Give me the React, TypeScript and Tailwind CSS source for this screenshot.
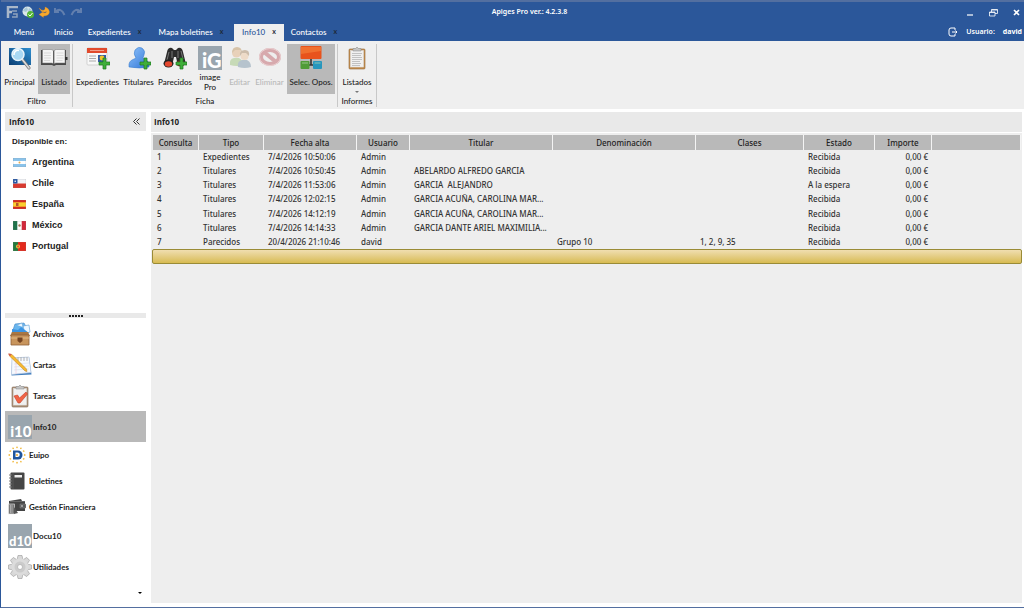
import type { ReactNode } from "react";

const tabs = [
  { name: "Menú", width: "w-[44px]" },
  { name: "Inicio", width: "w-[35px]" },
  { name: "Expedientes", width: "w-[67px]", closable: true },
  { name: "Mapa boletines", width: "w-[86px]", closable: true },
  { name: "Info10", width: "w-[50px]", closable: true, active: true },
  { name: "Contactos", width: "w-[60px]", closable: true },
];

const columns = [
  { name: "Consulta", width: "w-[46px]" },
  { name: "Tipo", width: "w-[65px]" },
  { name: "Fecha alta", width: "w-[93px]" },
  { name: "Usuario", width: "w-[53px]" },
  { name: "Titular", width: "w-[143px]" },
  { name: "Denominación", width: "w-[143px]" },
  { name: "Clases", width: "w-[108px]" },
  { name: "Estado", width: "w-[71px]" },
  { name: "Importe", width: "w-[57px]" },
  { name: "", width: "" },
];

const rows = [
  ["1", "Expedientes", "7/4/2026 10:50:06", "Admin", "", "", "", "Recibida", "0,00 €"],
  ["2", "Titulares", "7/4/2026 10:50:45", "Admin", "ABELARDO ALFREDO GARCIA", "", "", "Recibida", "0,00 €"],
  ["3", "Titulares", "7/4/2026 11:53:06", "Admin", "GARCIA  ALEJANDRO", "", "", "A la espera", "0,00 €"],
  ["4", "Titulares", "7/4/2026 12:02:15", "Admin", "GARCIA ACUÑA, CAROLINA MAR...", "", "", "Recibida", "0,00 €"],
  ["5", "Titulares", "7/4/2026 14:12:19", "Admin", "GARCIA ACUÑA, CAROLINA MAR...", "", "", "Recibida", "0,00 €"],
  ["6", "Titulares", "7/4/2026 14:14:33", "Admin", "GARCIA DANTE ARIEL MAXIMILIA...", "", "", "Recibida", "0,00 €"],
  ["7", "Parecidos", "20/4/2026 21:10:46", "david", "", "Grupo 10", "1, 2, 9, 35", "Recibida", "0,00 €"],
];

function Plus() {
  return (
    <path d="M17 12h3v4h4v3h-4v4h-3v-4h-4v-3h4z" fill="#3fae3a" stroke="#1d7a22" strokeWidth=".7" />
  );
}

function SearchIcon() {
  return (
    <svg viewBox="0 0 24 24" className="size-6">
      <defs>
        <linearGradient id="screen" x1="0" y1="1" x2="1" y2="0">
          <stop offset="0" stopColor="#0b3f74" />
          <stop offset="1" stopColor="#2f8fd0" />
        </linearGradient>
      </defs>
      <rect x="1" y="2" width="22" height="17" fill="url(#screen)" />
      <path d="M14 13l7 9" stroke="#777" strokeWidth="3" strokeLinecap="round" />
      <path d="M14 13l7 9" stroke="#ddd" strokeWidth="1.6" strokeLinecap="round" />
      <circle cx="10" cy="8.500" r="6" fill="#a9d8f3" stroke="#e8f4fb" strokeWidth="1.500" />
      <path d="M6 9a4 4 0 0 1 5-4.500" stroke="#fff" strokeWidth="1.500" fill="none" />
    </svg>
  );
}

function BookIcon() {
  return (
    <svg viewBox="0 0 28 20" className="h-5 w-7">
      <path d="M1 2h11l2 1 2-1h10v15H16l-2 1-2-1H1z" fill="#4a4a4a" />
      <path d="M2.500 1.500H11q2 0 2.500 1.500v13q-.5-1-2-1h-9zM25 1.500h-8.500q-2 0-2.500 1.500v13q.5-1 2-1h9z" fill="#f4f4f4" stroke="#777" strokeWidth=".5" />
      <path d="M4 5h7M4 7.500h7M4 10h7M4 12.500h6M16.500 5h7M16.500 7.500h7M16.500 10h7M16.500 12.500h6" stroke="#cfcfcf" strokeWidth=".7" />
      <path d="M13.700 3v13" stroke="#555" />
      <path d="M25 9h2.500v3H25z" fill="#333" />
    </svg>
  );
}

function NewspaperIcon() {
  return (
    <svg viewBox="0 0 24 24" className="size-6">
      <rect x="1" y="2" width="20" height="17" rx="1" fill="#f8f8f8" stroke="#c4c4c4" strokeWidth=".7" />
      <rect x="1" y="2" width="20" height="5" fill="#e14a2c" />
      <path d="M4 4.500h14" stroke="#f2a08c" />
      <path d="M3 10h7M3 12.500h7M3 15h7" stroke="#aaa" />
      <rect x="12" y="9" width="8" height="7" fill="#315ba5" />
      <circle cx="16" cy="12" r="2.400" fill="#f1c52b" />
      <Plus />
    </svg>
  );
}

function PersonIcon() {
  return (
    <svg viewBox="0 0 24 24" className="size-6">
      <defs>
        <linearGradient id="person" x1="0" y1="0" x2="1" y2="1">
          <stop offset="0" stopColor="#8fc3fb" />
          <stop offset="1" stopColor="#2f74d6" />
        </linearGradient>
      </defs>
      <path d="M2 21q-1-6 5-8l2-1q-3-4-1-8 3-4 7-2 4 3 2 7l-1 3 3 2q4 2 3 7-9 2-20 0z" fill="url(#person)" stroke="#2f74c8" strokeWidth=".5" />
      <Plus />
    </svg>
  );
}

function BinocularsIcon() {
  return (
    <svg viewBox="0 0 24 24" className="size-6">
      <path d="M1 18L4 6q1-5 5-4l2 2h2l2-2q4-1 5 4l3 12-8 2-2-9h-2l-2 9z" fill="#2b2b2b" />
      <path d="M6 6l-2 8M18 5l2 8M9 5v7M15 5v7" stroke="#777" />
      <ellipse cx="5.500" cy="17.500" rx="5" ry="4" fill="#222" />
      <ellipse cx="5.500" cy="18" rx="3.700" ry="2.700" fill="#e4472e" />
      <ellipse cx="17.500" cy="17.500" rx="4" ry="3" fill="#7a2a20" />
      <Plus />
    </svg>
  );
}

function LetterLogo({ text, size }: { text: string; size: number }) {
  return (
    <svg viewBox="0 0 24 24" className="size-6">
      <rect width="24" height="24" fill="#99a5ae" />
      <text x="23.500" y="22" textAnchor="end" fontFamily="Lato, sans-serif" fontWeight="900" fontSize={size} fill="#fff">
        {text}
      </text>
    </svg>
  );
}

function PeopleIcon() {
  return (
    <svg viewBox="0 0 24 24" className="size-6 opacity-40">
      <path d="M2 19q-1-6 4-7h5q4 2 4 7-6 2-13 0z" fill="#8dbb65" />
      <circle cx="8.500" cy="7" r="4.500" fill="#dfa56c" />
      <path d="M4 7q0-6 5-6t5 6l-2-3H7z" fill="#b48240" />
      <path d="M10 21q-1-6 4-7h5q4 2 4 7-6 2-13 0z" fill="#63849c" />
      <circle cx="16.500" cy="10" r="4" fill="#edbf90" />
      <path d="M12 10q-1-6 5-6 5 0 4 6l-3-3h-4z" fill="#9b7448" />
    </svg>
  );
}

function ForbiddenIcon() {
  return (
    <svg viewBox="0 0 24 24" className="size-6 opacity-40">
      <ellipse cx="12" cy="11" rx="9" ry="7" fill="#eee" stroke="#b5434b" strokeWidth="4" />
      <path d="M6 6l12 10" stroke="#b5434b" strokeWidth="4" />
      <ellipse cx="12" cy="11" rx="10.500" ry="8.500" fill="none" stroke="#e2a1a5" />
    </svg>
  );
}

function DiagramIcon() {
  return (
    <svg viewBox="0 0 24 24" className="size-6">
      <path d="M12 12v7M9 19h7" stroke="#333" strokeWidth="1.600" />
      <rect x="1.500" y="0" width="21" height="13" rx="1" fill="#e8531c" />
      <path d="M2 1h20v4L2 8z" fill="#f0702f" />
      <rect x="1.500" y="15" width="9" height="8" rx="1" fill="#4f9c37" />
      <rect x="14" y="15" width="9" height="8" rx="1" fill="#2796bd" />
      <path d="M3 17h6M15.500 17h6" stroke="#b7d9b0" strokeWidth=".7" />
    </svg>
  );
}

function ClipboardIcon({ checked }: { checked?: boolean }) {
  return (
    <svg viewBox="0 0 24 24" className="size-6">
      <rect x="4" y="3" width="16" height="20" rx="1" fill={checked ? "#b29a80" : "#c39155"} stroke={checked ? "#78604c" : "#96672f"} strokeWidth=".6" />
      <rect x="5.500" y="4.500" width="13" height="16.500" fill="#f0f0f0" stroke="#ddd" strokeWidth=".5" />
      <path d="M8 4V2.500h2.500Q12-.5 13.500 2.500H16V5H8z" fill="#c4c4c4" stroke="#888" strokeWidth=".5" />
      {checked ? (
        <path d="M6 12l3.500-1 2 3L18 8l1.500 2-7.500 9h-2z" fill="#f06445" stroke="#c53c25" strokeWidth=".6" />
      ) : (
        <path d="M7 7.500h10M7 9.500h9M7 11.500h10M7 13.500h10M7 15.500h8M7 17.500h9M7 19.500h8" stroke="#bcbcbc" strokeWidth=".9" />
      )}
    </svg>
  );
}

function ArchiveIcon() {
  return (
    <svg viewBox="0 0 24 24" className="size-6">
      <path d="M4 11L7 2l9-1 5 9z" fill="#69b6ee" stroke="#4186c8" strokeWidth=".6" />
      <path d="M9 3l5-2 1 4M15 4l6-1 1 7-5 2z" fill="#edf7ff" stroke="#6fa7d8" strokeWidth=".7" />
      <path d="M4 7l6 1 3-3 8 6H4z" fill="#3b94e3" />
      <path d="M2 14l2-4h16l2 4z" fill="#a97743" />
      <path d="M3 13h18v10H3z" fill="#c8955d" stroke="#8f6137" strokeWidth=".8" />
      <path d="M3 16h18" stroke="#e2ba84" />
      <path d="M9.500 15.500h5v3.500l-2.500 2-2.500-2z" fill="#754422" />
    </svg>
  );
}

function LetterIcon() {
  return (
    <svg viewBox="0 0 24 24" className="size-6">
      <path d="M4 5l17-1 2.500 17.500-20 1z" fill="#437fbe" />
      <path d="M4 5l17-1 2 15.500-19.500 2z" fill="#f6f9fe" stroke="#b9c9df" strokeWidth=".7" />
      <path d="M6 11l15-1M6 14l15-1M6 17l15-1" stroke="#d4e1f0" strokeWidth=".7" />
      <path d="M8 6v15" stroke="#f5b8c4" strokeWidth=".5" />
      <path d="M10 4v4M13 4v4M16 4v4M19 4v4" stroke="#b0b0b0" />
      <path d="M1 1l3 .5L18.500 16l.5 2.500-2-.5L1.500 3z" fill="#f5b82f" stroke="#b77920" strokeWidth=".5" />
      <path d="M0 .5L3.500 1 2 3.500z" fill="#d35c4b" />
    </svg>
  );
}

function EuipoIcon() {
  const stars = [0, 30, 60, 90, 120, 150, 180, 210, 240, 270, 300, 330];
  return (
    <svg viewBox="0 0 18 18" className="size-[18px]">
      {stars.map((angle) => (
        <circle key={angle} cx="9" cy="1.300" r=".9" fill="#f2bd48" transform={`rotate(${angle} 9 9)`} />
      ))}
      <path d="M5 4.500h5a4 4 0 0 1 0 9H5z" fill="#1f559d" />
      <path d="M7.500 6.500h2a2.200 2.200 0 0 1 0 4.500h-2z" fill="#fff" />
      <circle cx="9" cy="9" r="1" fill="#e7a92d" />
    </svg>
  );
}

function NotebookIcon() {
  return (
    <svg viewBox="0 0 18 18" className="size-[18px]">
      <rect x="2.500" y=".5" width="14" height="17" rx="1" fill="#454545" />
      <path d="M1 3h3M1 6h3M1 9h3M1 12h3M1 15h3" stroke="#777" />
      <path d="M5 1v16" stroke="#666" strokeWidth=".6" />
      <rect x="6.500" y="3" width="7.500" height="2.500" fill="#eee" />
    </svg>
  );
}

function WalletIcon() {
  return (
    <svg viewBox="0 0 18 18" className="size-[18px]">
      <path d="M1 3l12-2 1 2h3v10H6L5 6H1z" fill="#444" />
      <path d="M2 3.500h15" stroke="#777" strokeWidth=".7" />
      <path d="M12 6h6v4h-6z" fill="#5b5b5b" stroke="#999" strokeWidth=".4" />
      <circle cx="14" cy="8" r=".8" fill="#eee" />
      <rect x=".5" y="6" width="6" height="10" fill="#777" stroke="#eee" strokeWidth=".6" />
      <path d="M2 8h3M2 10h3M2 12h3M2 14h3" stroke="#ddd" strokeDasharray="1 .5" />
      <path d="M6 9l4 6-4 1z" fill="#555" />
    </svg>
  );
}

function GearIcon() {
  const teeth = [0, 45, 90, 135, 180, 225, 270, 315];
  return (
    <svg viewBox="0 0 24 24" className="size-6">
      {teeth.map((angle) => (
        <path key={angle} d="M9 5l1-4.500h4L15 5z" fill="#d8d8d8" stroke="#999" strokeWidth=".6" transform={`rotate(${angle} 12 12)`} />
      ))}
      <circle cx="12" cy="12" r="8.500" fill="#dcdcdc" />
      <circle cx="12" cy="12" r="5.500" fill="#cbcbcb" />
      <circle cx="12" cy="12" r="2.500" fill="#fff" stroke="#aaa" strokeWidth=".7" />
    </svg>
  );
}

function Flag({ country }: { country: string }) {
  return (
    <svg viewBox="0 0 13 9" className="h-[9px] w-[13px]">
      {country === "Argentina" && (
        <>
          <path d="M0 0h13v9H0z" fill="#8ac3eb" />
          <path d="M0 3h13v3H0z" fill="#fff" />
          <circle cx="6.500" cy="4.500" r="1" fill="#e6a94b" />
        </>
      )}
      {country === "Chile" && (
        <>
          <path d="M0 0h13v5H0z" fill="#f1f3f7" />
          <path d="M0 4.500h13V9H0z" fill="#d83a30" />
          <path d="M0 0h4.500v4.500H0z" fill="#2456a6" />
          <circle cx="2.200" cy="2.200" r=".8" fill="#fff" />
        </>
      )}
      {country === "España" && (
        <>
          <path d="M0 0h13v9H0z" fill="#d52b1e" />
          <path d="M0 2.300h13v4.400H0z" fill="#fbcf2d" />
          <path d="M3 3h2.500v3H3z" fill="#b5572a" />
        </>
      )}
      {country === "México" && (
        <>
          <path d="M0 0h13v9H0z" fill="#fff" />
          <path d="M0 0h4.300v9H0z" fill="#20734b" />
          <path d="M8.700 0H13v9H8.700z" fill="#d1283a" />
          <circle cx="6.500" cy="4.500" r="1.200" fill="#a07750" />
        </>
      )}
      {country === "Portugal" && (
        <>
          <path d="M0 0h13v9H0z" fill="#e32a1d" />
          <path d="M0 0h5v9H0z" fill="#267a3e" />
          <circle cx="5" cy="4.500" r="2" fill="#f1c638" />
          <path d="M4.200 3.500h1.600V5l-.8.800-.8-.8z" fill="#d63c32" />
        </>
      )}
      <path d="M0 0h13v9H0z" fill="none" stroke="#888" strokeWidth=".5" opacity=".5" />
    </svg>
  );
}

function RibbonButton({ icon, label, width, active, disabled, menu }: {
  icon: ReactNode;
  label: ReactNode;
  width: string;
  active?: boolean;
  disabled?: boolean;
  menu?: boolean;
}) {
  return (
    <button
      type="button"
      disabled={disabled}
      className={`flex h-[50px] flex-col items-center pt-[2px] ${width} ${active ? "bg-[#b9b9b9]" : ""} ${disabled ? "text-[#b8b8b8]" : "text-[#222]"}`}
    >
      <span className="flex h-6 items-center">{icon}</span>
      <span className="flex h-[23px] items-center justify-center pt-px text-center leading-[10px] whitespace-nowrap">{label}</span>
      {menu && <span className="-mt-[2px] border-x-2 border-t-2 border-x-transparent border-t-[#777]" />}
    </button>
  );
}

function RibbonGroup({ name, children }: { name: string; children: ReactNode }) {
  return (
    <section aria-label={name} className="flex flex-col border-r border-[#c8c8c8] px-[2px]">
      <div className="flex gap-[2px]">{children}</div>
      <div className="pt-[2px] text-center leading-[10px] whitespace-nowrap">{name}</div>
    </section>
  );
}

const navItems = [
  { name: "Archivos", icon: <ArchiveIcon /> },
  { name: "Cartas", icon: <LetterIcon /> },
  { name: "Tareas", icon: <ClipboardIcon checked /> },
  { name: "Info10", icon: <LetterLogo text="i10" size={15} />, active: true },
  { name: "Euipo", icon: <EuipoIcon />, small: true },
  { name: "Boletines", icon: <NotebookIcon />, small: true },
  { name: "Gestión Financiera", icon: <WalletIcon />, small: true },
  { name: "Docu10", icon: <LetterLogo text="d10" size={13} /> },
  { name: "Utilidades", icon: <GearIcon /> },
];

function Header() {
  return (
    <header className="border-t-2 border-[#536fa0] bg-[#2b579a] text-white">
      <div className="grid h-[22px] grid-cols-[1fr_auto_1fr] items-center pb-[2px]">
        <div className="flex items-center gap-[4px] pl-[5px]">
          <svg viewBox="0 0 12 12" className="size-3" fill="none">
            <path d="M2 12V1h10M2 6h4" stroke="#a9b7c9" strokeWidth="2.500" />
            <path d="M6 5h5M7 8h4v3H6" stroke="#8fa2bd" strokeWidth="1.500" />
          </svg>
          <button type="button" aria-label="Conectar">
            <svg viewBox="0 0 12 12" className="size-3">
              <circle cx="5.500" cy="5.500" r="5" fill="#d9e6ea" />
              <path d="M2 3l3-2 1 3-2 2-3-1zM7 2l3 2-1 3-3-1z" fill="#a9c8d6" />
              <circle cx="8.500" cy="8.500" r="3.500" fill="#54b637" />
              <path d="M6.500 8.500L8 10l2.500-3" stroke="#fff" fill="none" />
            </svg>
          </button>
          <button type="button" aria-label="Actualizar">
            <svg viewBox="0 0 12 12" className="size-3">
              <path d="M1 2l2.500 2Q6 5 7 3V1q4 1 4.500 5-.5 4-6 4v1.500L1 8.500 5.500 5.500V7q3 0 3-1.500Q4 8 1 2z" fill="#f8a92c" stroke="#d98420" strokeWidth=".3" />
            </svg>
          </button>
          <button type="button" aria-label="Deshacer">
            <svg viewBox="0 0 12 12" className="size-3" fill="none" stroke="#627fae" strokeWidth="2">
              <path d="M1 2v4h4M1.500 5.500Q7 1 10.500 9" />
            </svg>
          </button>
          <button type="button" aria-label="Rehacer">
            <svg viewBox="0 0 12 12" className="size-3" fill="none" stroke="#627fae" strokeWidth="2">
              <path d="M11 2v4H7M10.500 5.500Q5 1 1.500 9" />
            </svg>
          </button>
        </div>
        <h1 className="pl-[34px] font-['Noto_Sans',sans-serif] text-[7px] font-semibold">Apiges Pro ver.: 4.2.3.8</h1>
        <div className="flex justify-end gap-[14px] pr-[3px]">
          <button type="button" aria-label="Minimizar">
            <svg viewBox="0 0 9 9" className="size-[9px]"><path d="M1 7h6" stroke="#fff" strokeWidth="1.200" /></svg>
          </button>
          <button type="button" aria-label="Restaurar">
            <svg viewBox="0 0 9 9" className="size-[9px]" fill="none" stroke="#fff" strokeWidth=".8">
              <path d="M.5 4h5.500v4H.5zM2.500 4V1.500h6v4H6M.5 4.500H6M2.500 2h6" />
            </svg>
          </button>
          <button type="button" aria-label="Cerrar">
            <svg viewBox="0 0 9 9" className="size-[9px]"><path d="M2 2l5 5M7 2L2 7" stroke="#fff" strokeWidth="1.600" /></svg>
          </button>
        </div>
      </div>
      <div className="flex h-[17px] justify-between">
        <nav className="flex pl-px">
          {tabs.map((tab) => (
            <div
              key={tab.name}
              className={`flex items-center justify-center pb-px ${tab.width} ${tab.closable ? "gap-[7px]" : ""} ${tab.active ? "bg-[#efefef] text-[#2b579a]" : ""}`}
            >
              <button type="button" className="whitespace-nowrap">{tab.name}</button>
              {tab.closable && (
                <button type="button" aria-label={`Cerrar ${tab.name}`} className="pb-px text-[7px] font-bold text-[#1d2836]">x</button>
              )}
            </div>
          ))}
        </nav>
        <div className="flex items-center pr-[2px] pb-px font-['Noto_Sans',sans-serif] text-[7px] font-semibold">
          <button type="button" aria-label="Salir" className="mr-2">
            <svg viewBox="0 0 10 10" className="size-[10px]" fill="none" stroke="#fff">
              <path d="M7 3V1H3Q1 1 1 3v4q0 2 2 2h4V7M4 5h5M7.500 3.500L9 5 7.500 6.500" />
            </svg>
          </button>
          <span className="mr-2">Usuario:</span>
          <span className="font-bold">david</span>
        </div>
      </div>
    </header>
  );
}

function Ribbon() {
  return (
    <div className="flex h-[68px] bg-[#efefef] pt-[3px] pb-[2px]">
      <RibbonGroup name="Filtro">
        <RibbonButton icon={<SearchIcon />} label="Principal" width="w-[33px]" />
        <RibbonButton icon={<BookIcon />} label="Listado" width="w-[32px]" active />
      </RibbonGroup>
      <RibbonGroup name="Ficha">
        <RibbonButton icon={<NewspaperIcon />} label="Expedientes" width="w-[45px]" />
        <RibbonButton icon={<PersonIcon />} label="Titulares" width="w-[33px]" />
        <RibbonButton icon={<BinocularsIcon />} label="Parecidos" width="w-[36px]" />
        <RibbonButton icon={<LetterLogo text="iG" size={20} />} label={<>image<br />Pro</>} width="w-[30px]" />
        <RibbonButton icon={<PeopleIcon />} label="Editar" width="w-[25px]" disabled />
        <RibbonButton icon={<ForbiddenIcon />} label="Eliminar" width="w-[31px]" disabled />
        <RibbonButton icon={<DiagramIcon />} label="Selec. Opos." width="w-[48px]" active />
      </RibbonGroup>
      <RibbonGroup name="Informes">
        <RibbonButton icon={<ClipboardIcon />} label="Listados" width="w-[34px]" menu />
      </RibbonGroup>
    </div>
  );
}

function Sidebar() {
  return (
    <aside className="flex w-[150px] shrink-0 flex-col pr-[5px] pl-[4px]">
      <div className="mt-[3px] flex h-[19px] items-center justify-between bg-[#e9e9e9] pr-[6px] pl-[4px]">
        <h2 className="font-['Open_Sans',sans-serif] text-[8px] font-bold">Info10</h2>
        <button type="button" aria-label="Contraer panel">
          <svg viewBox="0 0 7 7" className="size-[7px]" fill="none" stroke="#333"><path d="M3.500.5l-3 3 3 3M6.500.5l-3 3 3 3" /></svg>
        </button>
      </div>
      <div className="flex-1 pl-[7px] font-['Liberation_Sans',Arial,sans-serif] text-[9px] font-bold">
        <h3 className="flex h-[21px] items-center text-[8px]">Disponible en:</h3>
        <ul>
          {["Argentina", "Chile", "España", "México", "Portugal"].map((country) => (
            <li key={country} className="flex h-[21px] items-center gap-[6px] pl-px">
              <Flag country={country} />
              <a href="#">{country}</a>
            </li>
          ))}
        </ul>
      </div>
      <div className="flex h-[5px] items-center justify-center gap-px bg-[#e9e9e9]">
        {[1, 2, 3, 4, 5].map((dot) => (
          <span key={dot} className="size-[2px] bg-[#222]" />
        ))}
      </div>
      <nav>
        {navItems.map((item) => (
          <button
            key={item.name}
            type="button"
            className={`flex w-full items-center pl-[3px] text-[8px] font-bold ${item.small ? "h-[26px] gap-[3px]" : "h-[31px] gap-px"} ${item.active ? "bg-[#b9b9b9]" : ""}`}
          >
            {item.icon}
            {item.name}
          </button>
        ))}
      </nav>
      <button type="button" aria-label="Más opciones" className="mr-[4px] flex h-[25px] items-center self-end pb-[4px]">
        <span className="border-x-2 border-t-2 border-x-transparent border-t-black" />
      </button>
    </aside>
  );
}

function QueryTable() {
  return (
    <main className="mt-[3px] mr-[2px] mb-[4px] min-w-0 flex-1 bg-[#eeeeee] font-['Noto_Sans',sans-serif]">
      <h2 className="flex h-[21px] items-center border-b border-white bg-[#e9e9e9] pl-[3px] font-['Open_Sans',sans-serif] text-[8px] font-bold">Info10</h2>
      <div className="pt-[2px] pr-px pl-[2px]">
        <table className="h-[114px] w-full table-fixed border-separate border-spacing-0 text-[8px] leading-[12px] text-[#333]">
          <thead>
            <tr>
              {columns.map((column) => (
                <th key={column.name} className={`h-[15px] border-r border-[#f4f4f4] bg-[#b9b9b9] p-0 font-medium text-[#222] ${column.width}`}>
                  {column.name}
                </th>
              ))}
            </tr>
          </thead>
          <tbody>
            {rows.map((row) => (
              <tr key={row[0]}>
                {row.map((cell, i) => (
                  <td key={i} className={`h-[14px] overflow-hidden p-0 whitespace-pre ${i === 8 ? "pr-[4px] text-right" : "pl-[4px]"}`}>
                    {cell}
                  </td>
                ))}
                <td />
              </tr>
            ))}
          </tbody>
        </table>
      </div>
      <div className="ml-px h-[15px] rounded-xs border border-[#9a8b36] bg-linear-to-b from-[#f0deb0] to-[#d8bb50]" />
    </main>
  );
}

export default function App() {
  return (
    <div className="flex min-h-screen flex-col border-b border-l border-b-[#536fa0] border-l-[#2b579a] bg-white font-[Lato,sans-serif] text-[8px] font-medium text-[#222]">
      <Header />
      <Ribbon />
      <div className="flex flex-1">
        <Sidebar />
        <QueryTable />
      </div>
    </div>
  );
}
